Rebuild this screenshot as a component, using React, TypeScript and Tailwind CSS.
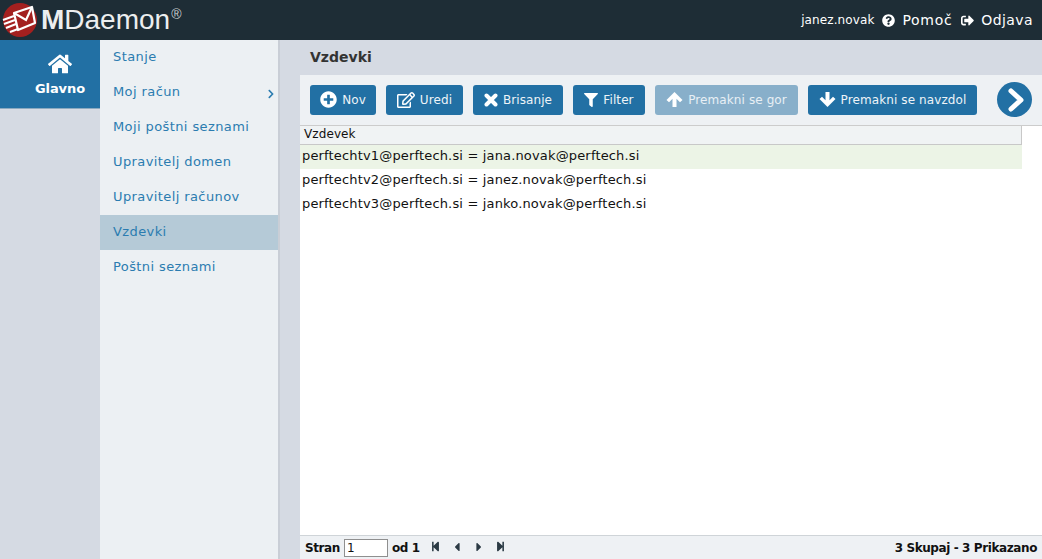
import type { ReactNode } from 'react';
import {
  FaCaretLeft,
  FaCaretRight,
  FaChevronRight,
  FaFilter,
  FaHome,
  FaPlusCircle,
  FaQuestionCircle,
  FaRegEdit,
  FaSignOutAlt,
  FaStepBackward,
  FaStepForward,
} from 'react-icons/fa';

const menuItems = [
  'Stanje',
  'Moj račun',
  'Moji poštni seznami',
  'Upravitelj domen',
  'Upravitelj računov',
  'Vzdevki',
  'Poštni seznami',
];

const aliases = [
  'perftechtv1@perftech.si = jana.novak@perftech.si',
  'perftechtv2@perftech.si = janez.novak@perftech.si',
  'perftechtv3@perftech.si = janko.novak@perftech.si',
];

type ToolButtonProps = {
  label: string;
  icon: ReactNode;
  width: string;
  disabled?: boolean;
};

function ToolButton({ label, icon, width, disabled }: ToolButtonProps) {
  return (
    <div
      className={`flex h-[30px] items-center justify-center gap-[5px] rounded-[3px] text-[12px] tracking-[0.1px] ${width} ${
        disabled ? 'bg-[#88afca] text-[#e8eff5]' : 'bg-[#2270a4] text-[#eef4f8]'
      }`}
    >
      <span className="flex shrink-0 items-center text-white">{icon}</span>
      <span className="pt-[1px]">{label}</span>
    </div>
  );
}

function ThickArrow({ down }: { down?: boolean }) {
  return (
    <svg width="17" height="17" viewBox="0 0 17 17" className={down ? 'rotate-180' : ''}>
      <path d="M8.5 1 L16.5 9 L14 11.2 L10.5 7.8 L10.5 16 L6.5 16 L6.5 7.8 L3 11.2 L0.5 9 Z" fill="currentColor" />
    </svg>
  );
}

function ThickCross() {
  return (
    <svg width="14" height="14" viewBox="0 0 14 14">
      <path d="M2.5 2.5 L11.5 11.5 M11.5 2.5 L2.5 11.5" stroke="currentColor" strokeWidth="4" strokeLinecap="round" />
    </svg>
  );
}

function Logo() {
  return (
    <div className="flex items-center">
      <svg width="40" height="40" viewBox="0 0 40 40" className="shrink-0">
        <circle cx="20" cy="20" r="17" fill="#a3201f" />
        <g fill="none" stroke="#ffffff" strokeWidth="2.2">
          <path d="M14 13 L32 7 L35 23 L18 30 Z" strokeLinejoin="round" />
          <path d="M14 13 L26 20 L32 7" />
        </g>
        <path d="M3 20 L14 16 M4 24 L15 20 M6 28 L16 24 M10 32 L18 29" stroke="#ffffff" strokeWidth="2" fill="none" />
      </svg>
      <span className="ml-[1px] font-['Liberation_Sans',sans-serif] text-[28px] leading-none text-[#eceeef]">
        <span className="font-bold">M</span>Daemon
      </span>
      <span className="mb-[12px] ml-[1px] font-['Liberation_Sans',sans-serif] text-[14px] leading-none text-[#c9cdd0]">®</span>
    </div>
  );
}

export default function App() {
  return (
    <div className="flex h-[559px] w-[1042px] flex-col overflow-hidden bg-white font-['DejaVu_Sans',sans-serif] text-[13px]">
      <header className="flex h-10 shrink-0 items-center justify-between bg-[#1e2d36] pr-[9px]">
        <Logo />
        <div className="flex items-center text-white">
          <span className="text-[12px] tracking-[0.1px]">janez.novak</span>
          <FaQuestionCircle size={13} className="ml-2" />
          <span className="ml-[7px] text-[14px] tracking-[0.7px]">Pomoč</span>
          <FaSignOutAlt size={13} className="ml-[9px]" />
          <span className="ml-[7px] text-[14px] tracking-[0.4px]">Odjava</span>
        </div>
      </header>

      <div className="flex min-h-0 flex-1">
        <aside className="w-[100px] shrink-0 bg-[#d5dae3]">
          <div className="flex h-[69px] flex-col items-center border-b border-[#8aa9c0] bg-[#2270a4] pl-5 pt-[12px] text-white">
            <FaHome size={24} />
            <span className="mt-[3px] text-[13px] font-bold tracking-[-0.1px]">Glavno</span>
          </div>
        </aside>

        <nav className="w-[180px] shrink-0 border-r-2 border-[#c9ced6] bg-[#ecf0f3]">
          {menuItems.map((item) => (
            <div
              key={item}
              className={`relative flex h-[35px] items-center pb-[2px] pl-[13px] text-[13px] tracking-[0.4px] text-[#2b7cb0] ${
                item === 'Vzdevki' ? 'bg-[#b5cad7]' : ''
              }`}
            >
              {item}
              {item === 'Moj račun' && (
                <FaChevronRight size={10} className="absolute right-[2px] top-[14px] text-[#2b7cb0]" />
              )}
            </div>
          ))}
        </nav>

        <div className="flex min-w-0 flex-1 flex-col bg-[#d5dae3]">
          <div className="flex h-[35px] shrink-0 items-center pl-[30px] text-[14px] font-bold text-[#333333]">
            Vzdevki
          </div>

          <main className="ml-5 flex min-h-0 flex-1 flex-col bg-white">
            <div className="flex h-[51px] shrink-0 items-center gap-[10px] border-b border-[#cccccc] bg-[#eef1f4] pb-[1px] pl-[10px]">
              <ToolButton label="Nov" icon={<FaPlusCircle size={17} />} width="w-[66px]" />
              <ToolButton label="Uredi" icon={<FaRegEdit size={18} />} width="w-[77px]" />
              <ToolButton label="Brisanje" icon={<ThickCross />} width="w-[90px]" />
              <ToolButton label="Filter" icon={<FaFilter size={14} />} width="w-[72px]" />
              <ToolButton label="Premakni se gor" icon={<ThickArrow />} width="w-[143px]" disabled />
              <ToolButton label="Premakni se navzdol" icon={<ThickArrow down />} width="w-[169px]" />
              <div className="ml-[10px] flex h-[35px] w-[35px] items-center justify-center rounded-full bg-[#2270a4] text-white">
                <svg width="20" height="24" viewBox="0 0 20 24" className="ml-[3px]">
                  <path d="M5 3 L15 12 L5 21" fill="none" stroke="currentColor" strokeWidth="5" strokeLinecap="round" strokeLinejoin="round" />
                </svg>
              </div>
            </div>

            <div className="flex h-[19px] w-[722px] shrink-0 items-center border-r border-b border-[#c8c8c8] bg-[#f0f3f4] pb-[2px] pl-[4px] text-[12px] tracking-[0.1px] text-[#111111]">
              Vzdevek
            </div>

            <div className="min-h-0 flex-1">
              {aliases.map((alias, i) => (
                <div
                  key={alias}
                  className={`flex h-6 w-[722px] items-center pb-[2px] pl-[2px] text-[13px] tracking-[0.16px] text-[#111111] ${
                    i === 0 ? 'bg-[#ecf4e6]' : ''
                  }`}
                >
                  {alias}
                </div>
              ))}
            </div>

            <footer className="flex h-6 shrink-0 items-center justify-between border-t border-[#cfd4d8] bg-[#eef1f4] pl-[5px] pr-[5px] text-[12px] font-bold tracking-[-0.4px] text-[#111111]">
              <div className="flex items-center">
                <span>Stran</span>
                <input
                  readOnly
                  value="1"
                  className="ml-1 h-[18px] w-[44px] border border-[#8f8f8f] bg-white pl-[2px] text-[12px] font-normal text-[#111111] outline-none"
                />
                <span className="ml-1">od 1</span>
                <div className="ml-[10px] mb-[2px] flex items-center gap-[10px] text-[#2b3a44]">
                  <FaStepBackward size={11} />
                  <FaCaretLeft size={14} className="-mx-[1px]" />
                  <FaCaretRight size={14} className="-mx-[1px]" />
                  <FaStepForward size={11} />
                </div>
              </div>
              <span>3 Skupaj - 3 Prikazano</span>
            </footer>
          </main>
        </div>
      </div>
    </div>
  );
}
